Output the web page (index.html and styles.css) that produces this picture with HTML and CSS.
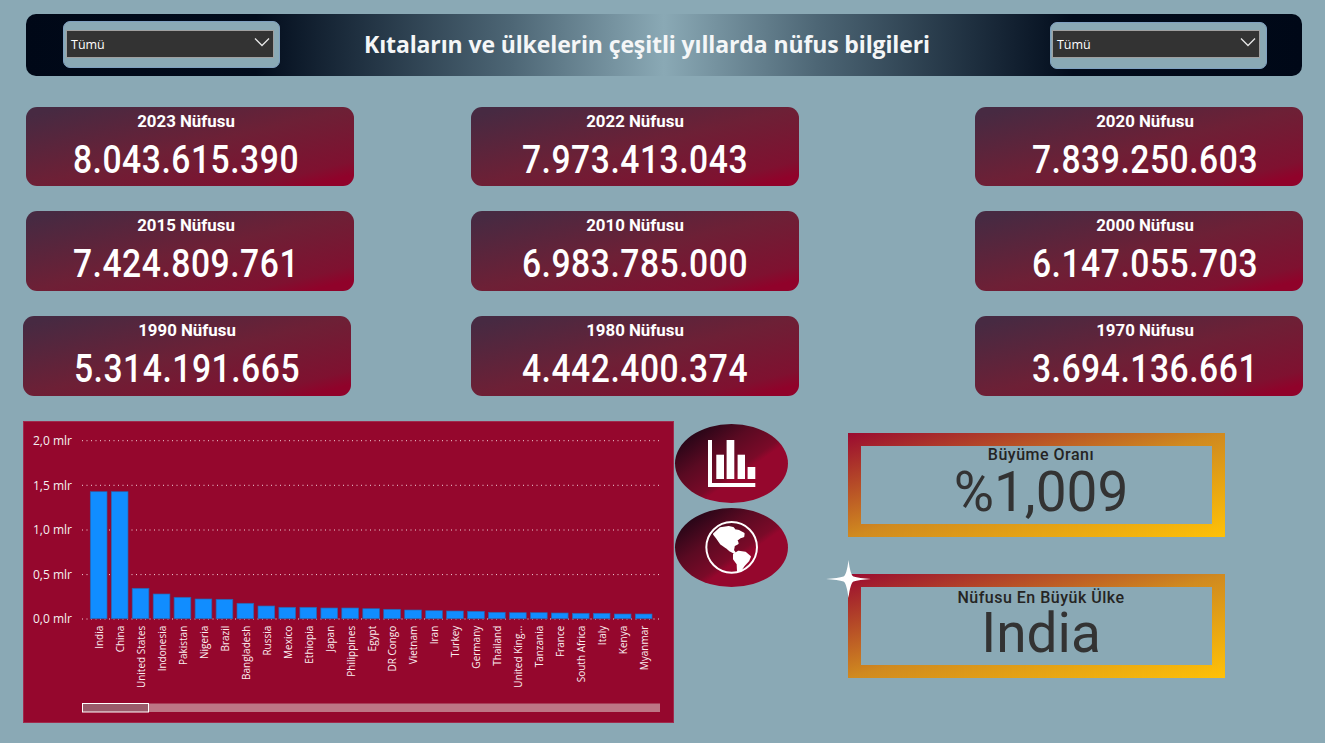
FILE: index.html
```html
<!DOCTYPE html>
<html lang="tr">
<head>
<meta charset="utf-8">
<title>Nüfus</title>
<link rel="stylesheet" href="styles.css">
</head>
<body>
<main class="page">
  <header class="banner">
    <div class="slicer slicer-left">
      <div class="select"><span>Tümü</span>
        <svg class="chev" viewBox="0 0 16 10"><path d="M1 1.500l7 7 7-7"/></svg>
      </div>
    </div>
    <h1 class="title">Kıtaların ve ülkelerin çeşitli yıllarda nüfus bilgileri</h1>
    <div class="slicer slicer-right">
      <div class="select"><span>Tümü</span>
        <svg class="chev" viewBox="0 0 16 10"><path d="M1 1.500l7 7 7-7"/></svg>
      </div>
    </div>
  </header>

  <section class="cards">
    <div class="card col-a"><div class="card-label">2023 Nüfusu</div><div class="card-value">8.043.615.390</div></div>
    <div class="card"><div class="card-label">2022 Nüfusu</div><div class="card-value">7.973.413.043</div></div>
    <div class="card col-c"><div class="card-label">2020 Nüfusu</div><div class="card-value">7.839.250.603</div></div>
    <div class="card col-a"><div class="card-label">2015 Nüfusu</div><div class="card-value">7.424.809.761</div></div>
    <div class="card"><div class="card-label">2010 Nüfusu</div><div class="card-value">6.983.785.000</div></div>
    <div class="card col-c"><div class="card-label">2000 Nüfusu</div><div class="card-value">6.147.055.703</div></div>
    <div class="card card-shift"><div class="card-label">1990 Nüfusu</div><div class="card-value">5.314.191.665</div></div>
    <div class="card"><div class="card-label">1980 Nüfusu</div><div class="card-value">4.442.400.374</div></div>
    <div class="card col-c"><div class="card-label">1970 Nüfusu</div><div class="card-value">3.694.136.661</div></div>
  </section>

  <section class="bottom">
    <div class="chart">
      <svg class="chart-svg" viewBox="0 0 651 302" width="651" height="302">
        <g class="grid">
          <line x1="59" x2="637" y1="19.700" y2="19.700"/>
          <line x1="59" x2="637" y1="64.300" y2="64.300"/>
          <line x1="59" x2="637" y1="109" y2="109"/>
          <line x1="59" x2="637" y1="153.600" y2="153.600"/>
          <line x1="59" x2="637" y1="198" y2="198"/>
        </g>
        <g class="yaxis">
          <text x="49" y="23.500">2,0 mlr</text>
          <text x="49" y="68.500">1,5 mlr</text>
          <text x="49" y="113">1,0 mlr</text>
          <text x="49" y="157.500">0,5 mlr</text>
          <text x="49" y="202">0,0 mlr</text>
        </g>
        <g class="bars">
          <rect x="67.3" y="70.7" width="16.7" height="127"/>
          <rect x="88.3" y="70.7" width="16.7" height="127"/>
          <rect x="109.2" y="167.3" width="16.7" height="30.4"/>
          <rect x="130.2" y="173" width="16.7" height="24.7"/>
          <rect x="151.1" y="176.3" width="16.7" height="21.4"/>
          <rect x="172.1" y="178" width="16.7" height="19.7"/>
          <rect x="193.1" y="178.3" width="16.7" height="19.4"/>
          <rect x="214" y="182.3" width="16.7" height="15.4"/>
          <rect x="235" y="185" width="16.7" height="12.7"/>
          <rect x="255.9" y="186.3" width="16.7" height="11.4"/>
          <rect x="276.9" y="186.3" width="16.7" height="11.4"/>
          <rect x="297.9" y="187" width="16.7" height="10.7"/>
          <rect x="318.8" y="187" width="16.7" height="10.7"/>
          <rect x="339.8" y="187.7" width="16.7" height="10"/>
          <rect x="360.7" y="188.3" width="16.7" height="9.4"/>
          <rect x="381.7" y="189" width="16.7" height="8.7"/>
          <rect x="402.7" y="189.7" width="16.7" height="8"/>
          <rect x="423.6" y="190" width="16.7" height="7.7"/>
          <rect x="444.6" y="190.3" width="16.7" height="7.4"/>
          <rect x="465.5" y="191.3" width="16.7" height="6.4"/>
          <rect x="486.5" y="191.7" width="16.7" height="6"/>
          <rect x="507.5" y="191.7" width="16.7" height="6"/>
          <rect x="528.4" y="192" width="16.7" height="5.7"/>
          <rect x="549.4" y="192.3" width="16.7" height="5.4"/>
          <rect x="570.3" y="192.3" width="16.7" height="5.4"/>
          <rect x="591.3" y="193" width="16.7" height="4.7"/>
          <rect x="612.3" y="193" width="16.7" height="4.7"/>
        </g>
        <g class="xaxis">
          <text transform="translate(80 204.7) rotate(-90)">India</text>
          <text transform="translate(101 204.7) rotate(-90)">China</text>
          <text transform="translate(121.9 204.7) rotate(-90)">United States</text>
          <text transform="translate(142.9 204.7) rotate(-90)">Indonesia</text>
          <text transform="translate(163.8 204.7) rotate(-90)">Pakistan</text>
          <text transform="translate(184.8 204.7) rotate(-90)">Nigeria</text>
          <text transform="translate(205.8 204.7) rotate(-90)">Brazil</text>
          <text transform="translate(226.7 204.7) rotate(-90)">Bangladesh</text>
          <text transform="translate(247.7 204.7) rotate(-90)">Russia</text>
          <text transform="translate(268.6 204.7) rotate(-90)">Mexico</text>
          <text transform="translate(289.6 204.7) rotate(-90)">Ethiopia</text>
          <text transform="translate(310.6 204.7) rotate(-90)">Japan</text>
          <text transform="translate(331.5 204.7) rotate(-90)">Philippines</text>
          <text transform="translate(352.5 204.7) rotate(-90)">Egypt</text>
          <text transform="translate(373.4 204.7) rotate(-90)">DR Congo</text>
          <text transform="translate(394.4 204.7) rotate(-90)">Vietnam</text>
          <text transform="translate(415.4 204.7) rotate(-90)">Iran</text>
          <text transform="translate(436.3 204.7) rotate(-90)">Turkey</text>
          <text transform="translate(457.3 204.7) rotate(-90)">Germany</text>
          <text transform="translate(478.2 204.7) rotate(-90)">Thailand</text>
          <text transform="translate(499.2 204.7) rotate(-90)">United King...</text>
          <text transform="translate(520.2 204.7) rotate(-90)">Tanzania</text>
          <text transform="translate(541.1 204.7) rotate(-90)">France</text>
          <text transform="translate(562.1 204.7) rotate(-90)">South Africa</text>
          <text transform="translate(583 204.7) rotate(-90)">Italy</text>
          <text transform="translate(604 204.7) rotate(-90)">Kenya</text>
          <text transform="translate(625 204.7) rotate(-90)">Myanmar</text>
        </g>
        <rect class="track" x="59" y="282.500" width="578" height="8.500"/>
        <rect class="thumb" x="59.500" y="282.500" width="66" height="8.500"/>
      </svg>
    </div>

    <div class="nav-buttons">
      <div class="nav-btn">
        <svg class="nav-icon" viewBox="0 0 48 48" width="48" height="48">
          <path d="M0 0h4v43h43.300v4H0z"/>
          <rect x="8.300" y="14.700" width="7.700" height="24.300"/>
          <rect x="18.600" y="0" width="7.700" height="39"/>
          <rect x="29.600" y="14.700" width="7.400" height="24.300"/>
          <rect x="39.600" y="27" width="7.700" height="12"/>
        </svg>
      </div>
      <div class="nav-btn">
        <svg class="nav-icon" viewBox="134 323 160 164" width="53.300" height="54.700">
          <circle class="globe-ring" cx="214" cy="405" r="76"/>
          <path class="land" d="M161 365L180 348 205 344 218 347 224 354 236 356 250 364 249 372 238 376 229 383 232 393 221 399 218 414 224 422 210 415 198 405 182 394 171 378z"/>
          <path class="land" d="M221 427L235 418 255 421 269 433 264 445 250 460 240 474 233 476 232 455 221 440z"/>
        </svg>
      </div>
    </div>

    <div class="kpis">
      <div class="kpi"><div class="kpi-label">Büyüme Oranı</div><div class="kpi-value">%1,009</div></div>
      <div class="kpi kpi-low">
        <svg class="star" viewBox="0 0 45 38" width="45" height="38"><path d="M22.500 0c1.200 10 3 15.500 5 16.500 3.500 1.200 9.500 2 17.500 2.500-8 .5-14 1.300-17.500 2.500-2 1-3.800 6.500-5 16.500-1.200-10-3-15.500-5-16.500C14 20.300 8 19.500 0 19c8-.5 14-1.300 17.500-2.500 2-1 3.800-6.500 5-16.500z"/></svg>
        <div class="kpi-label">Nüfusu En Büyük Ülke</div><div class="kpi-value">India</div>
      </div>
    </div>
  </section>
</main>
</body>
</html>
```

FILE: styles.css
```css
* { box-sizing: border-box; }

html, body {
  margin: 0;
  height: 100%;
}

body {
  background: #8aa9b5;
  font-family: "Roboto", "Liberation Sans", sans-serif;
  overflow: hidden;
}

.page {
  width: 1325px;
  height: 743px;
  padding: 14px 23px 0 26px;
}

/* Banner */
.banner {
  display: flex;
  align-items: flex-start;
  height: 62px;
  padding: 7px 36px 0 37px;
  border-radius: 10px;
  background: linear-gradient(90deg, #000817 0%, #020c1c 18%, #1f3040 26%, #4d6675 38%, #8aa9b5 50%, #4d6675 62%, #1f3040 74%, #020c1c 82%, #000817 100%);
}

.slicer {
  flex: none;
  width: 217px;
  height: 47px;
  padding: 8px 5px 0 2px;
  background: #8aa9b5;
  border: 1px solid #7fa0c0;
  border-radius: 7px;
}

.slicer-right {
  margin-top: 1px;
  padding: 7px 6px 0 1px;
}

.select {
  display: flex;
  align-items: center;
  justify-content: space-between;
  height: 28px;
  padding: 0 3px 0 4px;
  background: #333;
  border: 1px solid #a0a0a0;
  color: #fff;
  font-family: "Open Sans", "Liberation Sans", sans-serif;
  font-size: 12.500px;
}

.chev {
  width: 16px;
  height: 10px;
  margin-top: -4px;
}

.chev path {
  fill: none;
  stroke: #e6e6e6;
  stroke-width: 1.300;
}

.title {
  flex: 1;
  margin: 7px 120px 0 84px;
  color: #f4f6f7;
  font-family: "Open Sans", "Liberation Sans", sans-serif;
  font-size: 23px;
  font-weight: 700;
  letter-spacing: -0.120px;
  line-height: 32px;
  text-align: center;
  white-space: nowrap;
}

/* Cards */
.cards {
  display: grid;
  grid-template-columns: 445px 504px 327px;
  grid-template-rows: 79px 80px 80px;
  row-gap: 25px;
  margin-top: 31px;
}

.card {
  width: 328px;
  height: 100%;
  padding-top: 4px;
  border-radius: 11px;
  background: linear-gradient(to bottom right, #472a42 6%, #6d2036 50%, #7f1130 84%, #90022a 93%);
  color: #fff;
  text-align: center;
}

.col-a {
  padding-right: 8px;
}

.col-c {
  padding-left: 12px;
}

.card-shift {
  margin-left: -3px;
}

.card-label {
  font-size: 17px;
  font-weight: 700;
  line-height: 20px;
  transform: scaleX(0.99);
}

.card-value {
  margin-top: 7px;
  font-size: 38px;
  font-weight: 500;
  line-height: 44px;
  letter-spacing: 0.600px;
  transform: scaleX(0.885);
}

/* Bottom row */
.bottom {
  display: flex;
  align-items: flex-start;
  margin: 25px 0 0 -3px;
}

.chart {
  flex: none;
  width: 651px;
  height: 302px;
  background: #95072d;
  outline: 1px solid #a02a4c;
  outline-offset: -1px;
}

.chart-svg {
  display: block;
}

.grid line {
  stroke: #f3d3da;
  stroke-width: 1;
  stroke-dasharray: 1 3.500;
}

.yaxis text {
  fill: #f4f0f0;
  font-family: "Open Sans", "Liberation Sans", sans-serif;
  font-size: 12px;
  text-anchor: end;
}

.xaxis text {
  fill: #fbeef0;
  font-family: "Open Sans", "Liberation Sans", sans-serif;
  font-size: 10px;
  text-anchor: end;
}

.bars rect {
  fill: #118dff;
  stroke: #2b64ad;
  stroke-width: 0.700;
}

.track {
  fill: #bd7585;
}

.thumb {
  fill: #9a5a6a;
  stroke: #fff;
  stroke-width: 1;
}

/* Round nav buttons */
.nav-buttons {
  flex: none;
  display: flex;
  flex-direction: column;
  gap: 5px;
  margin: 3px 0 0 1px;
}

.nav-btn {
  display: flex;
  align-items: center;
  justify-content: center;
  width: 113px;
  height: 79px;
  border-radius: 50%;
  background: linear-gradient(to bottom right, #2a0618 15%, #5a0a22 36%, #7a0a28 56%, #95072d 61%);
}

.nav-icon {
  fill: #fff;
}

.globe-ring {
  fill: none;
  stroke: #fff;
  stroke-width: 6;
}

.land {
  stroke: #fff;
  stroke-width: 6;
  stroke-linejoin: round;
}

/* KPIs */
.kpis {
  flex: none;
  display: flex;
  flex-direction: column;
  gap: 37px;
  margin: 12px 0 0 60px;
}

.kpi {
  position: relative;
  width: 377px;
  height: 104px;
  padding-left: 9px;
  border: 13px solid transparent;
  background: linear-gradient(#8aa9b5, #8aa9b5) padding-box, linear-gradient(to bottom right, #9a0a30 0%, #d08a1f 50%, #ffc107 100%) border-box;
  color: #333;
  text-align: center;
}

.kpi-low {
  padding-top: 2px;
}

.kpi-low .kpi-value {
  margin-top: -2px;
}

.kpi-label {
  color: #252423;
  font-size: 16px;
  font-weight: 500;
  line-height: 18px;
  letter-spacing: 0.500px;
}

.kpi-value {
  font-size: 55px;
  font-weight: 400;
  line-height: 56px;
}

.star {
  position: absolute;
  top: -27px;
  left: -35px;
  fill: #fff;
}
```
